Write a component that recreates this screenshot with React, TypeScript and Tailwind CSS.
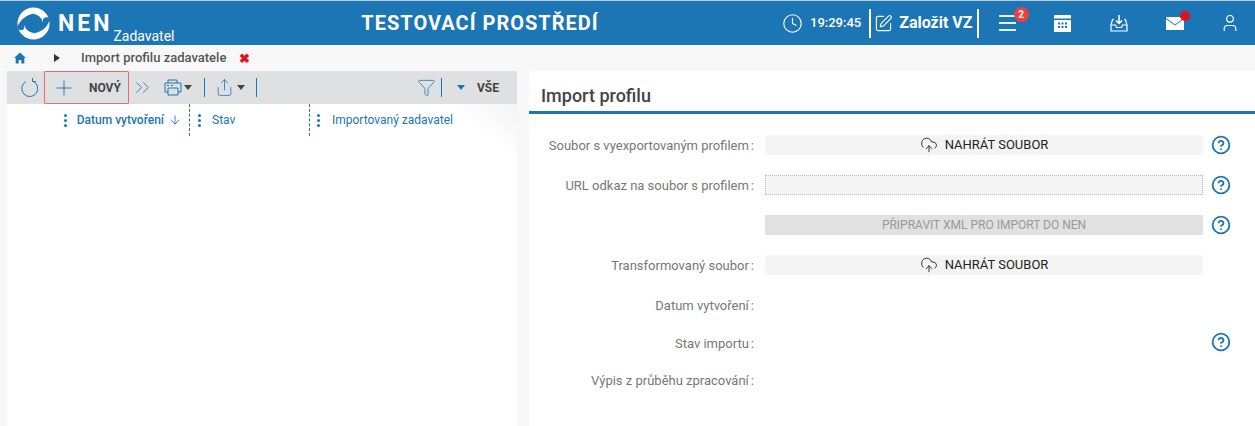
import { ArrowDown, ChevronsRight, CircleHelp, Clock, CloudUpload, Filter, Plus, Share, SquarePen, User } from "lucide-react";

const font = { fontFamily: "Roboto, sans-serif" };

function Logo() {
    return (
        <svg width="33" height="33" viewBox="0 0 36 36" className="shrink-0">
            <circle cx="18" cy="18" r="17.5" fill="#fff" />
            <circle cx="18" cy="18" r="10" fill="#1c75b4" />
            <path d="M0 23C3 14 11 7 21 7.500 13 10 9 15 7.500 24 5 26 2 26 0 23z" fill="#1c75b4" />
            <path d="M36 13c-3 10-11 16-21 15.500 8-2 12-7 13.500-15.500 2.500-2.500 5.500-2.500 7.500 0z" fill="#1c75b4" />
        </svg>
    );
}

function HeaderBar() {
    return (
        <header className="h-[45px] bg-[#1c75b4] border-t-[1px] border-[#b9c9d6] flex items-center text-white">
            <div className="w-[330px] flex items-center pl-[17px]">
                <Logo />
                <span className="ml-[8px] text-[23px] font-bold tracking-[3px] leading-none">NEN</span>
                <span className="ml-[1px] mt-[26px] text-[14px] leading-none">Zadavatel</span>
            </div>
            <div className="w-[300px] text-center text-[20px] font-bold tracking-[1px]">TESTOVACÍ PROSTŘEDÍ</div>
            <div className="ml-[152px] flex items-center">
                <Clock className="size-[21px]" strokeWidth={1.3} />
                <span className="ml-[7px] text-[13px] font-medium">19:29:45</span>
                <div className="ml-[8px] h-[29px] w-[2px] bg-white" />
                <SquarePen className="ml-[3px] size-[19px]" strokeWidth={1.4} />
                <span className="ml-[6px] text-[16px] font-bold">Založit VZ</span>
                <div className="ml-[4px] h-[29px] w-[2px] bg-white" />
                <div className="relative ml-[20px] flex flex-col gap-[5px] w-[17px]">
                    <div className="h-[2px] bg-white/90" />
                    <div className="h-[2px] bg-white/90" />
                    <div className="h-[2px] bg-white/90" />
                    <span className="absolute -top-[8px] -right-[13px] size-[15px] rounded-full bg-[#ef3e3e] text-[10px] font-bold flex items-center justify-center">2</span>
                </div>
                <svg width="17" height="17" viewBox="0 0 17 17" className="ml-[38px]">
                    <path d="M0 0h17v17H0z" fill="#fff" />
                    <path d="M0 3.500h17V5H0zM4 7.500h2v2H4zM7.500 7.500h2v2h-2zM11 7.500h2v2h-2zM4 11h2v2H4zM7.500 11h2v2h-2zM11 11h2v2h-2z" fill="#1c75b4" />
                </svg>
                <svg width="18" height="18" viewBox="0 0 18 18" fill="none" stroke="#fff" strokeWidth="1.200" className="ml-[39px]">
                    <path d="M4 5.500H2.500L1 11v6h16v-6l-1.500-5.500H14" />
                    <path d="M1 11h4.500l1 2.500h5l1-2.500H17" />
                    <path d="M9 1v8M6 6.500 9 9.500l3-3" strokeWidth="1.500" />
                </svg>
                <svg width="18" height="13" viewBox="0 0 18 13" className="ml-[38px]">
                    <path d="M0 0h18v13H0z" fill="#fff" />
                    <path d="M0 1.500 9 8l9-6.500" fill="none" stroke="#1c75b4" strokeWidth="1" />
                </svg>
                <span className="-ml-[4px] -mt-[15px] size-[10px] rounded-full bg-[#e2101a] relative" />
                <User className="ml-[30px] size-[20px]" strokeWidth={1.4} />
            </div>
        </header>
    );
}

function Crumbs() {
    return (
        <div className="h-[26px] bg-[#f8f8f8] flex items-center">
            <svg width="12" height="12" viewBox="0 0 12 12" className="ml-[14px]">
                <path d="M6 0.500 0 6h1.700v5.500h3V8h2.600v3.500h3V6H12z" fill="#1c75b4" />
            </svg>
            <svg width="6" height="8" viewBox="0 0 6 8" className="ml-[28px]">
                <path d="M0 0l6 4-6 4z" fill="#333" />
            </svg>
            <span className="ml-[21px] text-[13px] font-medium text-[#555]">Import profilu zadavatele</span>
            <span className="ml-[13px] text-[13px] font-bold leading-none text-[#e8101a]">✖</span>
        </div>
    );
}

function Divider() {
    return <div className="h-[19px] w-[1px] bg-[#1c75b4]" />;
}

function Toolbar() {
    return (
        <div className="h-[33px] bg-[#dfe0e2] flex items-center text-[#1c75b4]">
            <svg width="18" height="20" viewBox="0 0 18 20" fill="none" stroke="currentColor" strokeWidth="1" className="ml-[13px]">
                <path d="M6 3.500a8 8 0 1 0 6.500-.5" />
                <path d="M12.500 0v3.500H16" />
            </svg>
            <div className="ml-[6px] h-[33px] w-[85px] border-[1px] border-[#ee6a70] rounded-[1px] flex items-center">
                <Plus className="ml-[7px] size-[24px]" strokeWidth={0.9} />
                <span className="ml-[13px] text-[12px] font-bold text-[#444]">NOVÝ</span>
            </div>
            <ChevronsRight className="ml-[2px] size-[23px] -mr-[3px]" strokeWidth={0.9} />
            <svg width="18" height="17" viewBox="0 0 18 17" fill="none" stroke="currentColor" strokeWidth="1" className="ml-[13px]">
                <path d="M4 4V1h9v3M4 13H1V4h16v9h-3" />
                <path d="M4 9h10v7H4zM3 6.500h2M7 6.500h2" />
            </svg>
            <svg width="8" height="5" viewBox="0 0 8 5" className="ml-[2px]"><path d="M0 0h8L4 5z" fill="#444" /></svg>
            <div className="ml-[12px]"><Divider /></div>
            <Share className="ml-[10px] size-[19px]" strokeWidth={1} />
            <svg width="8" height="5" viewBox="0 0 8 5" className="ml-[3px]"><path d="M0 0h8L4 5z" fill="#444" /></svg>
            <div className="ml-[11px]"><Divider /></div>
            <Filter className="ml-auto size-[19px]" strokeWidth={1} />
            <div className="ml-[5px]"><Divider /></div>
            <svg width="8" height="5" viewBox="0 0 8 5" className="ml-[15px]"><path d="M0 0h8L4 5z" fill="#1c75b4" /></svg>
            <span className="ml-[12px] mr-[18px] text-[12px] font-bold text-[#444]">VŠE</span>
        </div>
    );
}

function Dots() {
    return (
        <div className="flex flex-col gap-[2px]">
            <span className="size-[3px] rounded-full bg-[#1c75b4]" />
            <span className="size-[3px] rounded-full bg-[#1c75b4]" />
            <span className="size-[3px] rounded-full bg-[#1c75b4]" />
        </div>
    );
}

function ListPanel() {
    return (
        <section className="relative ml-[7px] w-[510px] flex flex-col bg-white">
            <Toolbar />
            <div className="h-[32px] flex text-[12px] text-[#1c75b4]">
                <div className="w-[183px] flex items-center justify-end border-r border-dashed border-[#1c75b4] pr-[7px] font-medium">
                    <Dots />
                    <span className="ml-[10px]">Datum vytvoření</span>
                    <ArrowDown className="ml-[4px] size-[14px]" strokeWidth={1.4} />
                </div>
                <div className="w-[120px] flex items-center border-r border-dashed border-[#1c75b4] pl-[8px]">
                    <Dots />
                    <span className="ml-[11px]">Stav</span>
                </div>
                <div className="flex items-center pl-[7px]">
                    <Dots />
                    <span className="ml-[12px]">Importovaný zadavatel</span>
                </div>
            </div>
            <div className="absolute top-[33px] right-0 h-[50px] w-[60px] bg-gradient-to-bl from-[#f4f4f4] to-transparent to-60%" />
        </section>
    );
}

function Help() {
    return <CircleHelp className="size-[20px] text-[#1c75b4]" strokeWidth={2.2} />;
}

function UploadButton() {
    return (
        <div className="h-[20px] w-[438px] bg-[#f4f4f4] rounded-[4px] flex items-center justify-center text-[13px] text-[#222]">
            <CloudUpload className="size-[18px] mr-[7px]" strokeWidth={1.2} />
            NAHRÁT SOUBOR
        </div>
    );
}

function Row({ label, children, help, h = 40 }: { label: string; children?: React.ReactNode; help?: boolean; h?: number }) {
    return (
        <div className="flex items-center" style={{ height: h }}>
            <div className="w-[225px] pt-[2px] text-right text-[13px] text-[#777]">
                {label}
                {label && <span className="ml-[2px]">:</span>}
            </div>
            <div className="ml-[11px] w-[438px]">{children}</div>
            {help && <div className="ml-[8px] -mt-[1px] flex"><Help /></div>}
        </div>
    );
}

function DetailPanel() {
    return (
        <section className="ml-[12px] flex-1 bg-white">
            <div className="h-[43px] border-b-[3px] border-[#1c75b4] flex items-end pb-[2px] pl-[12px] text-[18px] font-medium text-[#444]">
                Import profilu
            </div>
            <div className="pt-[11px]">
                <Row label="Soubor s vyexportovaným profilem" help><UploadButton /></Row>
                <Row label="URL odkaz na soubor s profilem" help>
                    <div className="h-[20px] bg-[#f4f4f4] border border-dotted border-[#bbb]" />
                </Row>
                <Row label="" help>
                    <div className="h-[20px] bg-[#e1e1e1] flex items-center justify-center text-[12px] text-[#999]">PŘIPRAVIT XML PRO IMPORT DO NEN</div>
                </Row>
                <Row label="Transformovaný soubor"><UploadButton /></Row>
                <Row label="Datum vytvoření" />
                <Row label="Stav importu" help h={35} />
                <Row label="Výpis z průběhu zpracování" />
            </div>
        </section>
    );
}

export default function App() {
    return (
        <div className="w-[1255px] h-[426px] overflow-hidden bg-[#f8f8f8]" style={font}>
            <HeaderBar />
            <Crumbs />
            <div className="flex h-[355px]">
                <ListPanel />
                <DetailPanel />
            </div>
        </div>
    );
}
